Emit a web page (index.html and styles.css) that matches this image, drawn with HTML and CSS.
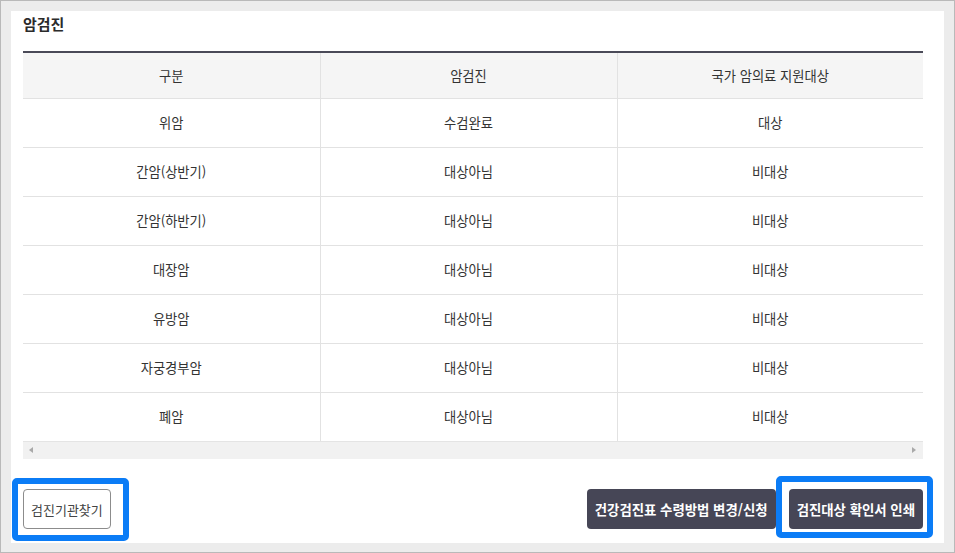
FILE: index.html
```html
<!DOCTYPE html>
<html lang="ko">
<head>
<meta charset="utf-8">
<title>암검진</title>
<link rel="stylesheet" href="styles.css">
</head>
<body>
<div class="frame">
  <div class="panel">
    <h2 class="title">암검진</h2>
    <table class="grid">
      <colgroup><col class="c1"><col class="c2"><col class="c3"></colgroup>
      <thead>
        <tr><th>구분</th><th>암검진</th><th>국가 암의료 지원대상</th></tr>
      </thead>
      <tbody>
        <tr><td>위암</td><td>수검완료</td><td>대상</td></tr>
        <tr><td>간암(상반기)</td><td>대상아님</td><td>비대상</td></tr>
        <tr><td>간암(하반기)</td><td>대상아님</td><td>비대상</td></tr>
        <tr><td>대장암</td><td>대상아님</td><td>비대상</td></tr>
        <tr><td>유방암</td><td>대상아님</td><td>비대상</td></tr>
        <tr><td>자궁경부암</td><td>대상아님</td><td>비대상</td></tr>
        <tr><td>폐암</td><td>대상아님</td><td>비대상</td></tr>
      </tbody>
    </table>
    <div class="hscroll">
      <span class="arrow arrow-left"></span>
      <span class="arrow arrow-right"></span>
    </div>
    <div class="footer">
      <button class="btn btn-line">검진기관찾기</button>
      <div class="btn-group">
        <button class="btn btn-dark">건강검진표 수령방법 변경/신청</button>
        <button class="btn btn-dark">검진대상 확인서 인쇄</button>
      </div>
    </div>
  </div>
  <div class="ring ring-left"></div>
  <div class="ring ring-right"></div>
</div>
</body>
</html>
```

FILE: styles.css
```css
* { box-sizing: border-box; }
html, body { margin: 0; padding: 0; background: #ececec; }
body { font-family: "Noto Sans CJK KR", "Malgun Gothic", sans-serif; color: #333; }

.frame {
  position: relative;
  width: 955px;
  height: 553px;
  border: 1px solid #b9b9b9;
  background: #ececec;
  padding: 10px 10px 9px 10px;
}

.panel {
  background: #fff;
  height: 100%;
  padding: 3px 21px 0 12px;
}

.title {
  margin: 0;
  font-size: 15px;
  font-weight: 700;
  line-height: 20px;
  color: #2b2b2b;
}

.grid {
  margin-top: 17px;
  width: 900px;
  table-layout: fixed;
  border-collapse: collapse;
  border-top: 2px solid #4a4a58;
  font-size: 13.3px;
  color: #333;
}
.grid .c1 { width: 297px; }
.grid .c2 { width: 297px; }
.grid .c3 { width: 306px; }

.grid th, .grid td {
  padding: 0;
  text-align: center;
  font-weight: 400;
  border-bottom: 1px solid #e2e2e2;
}
.grid th + th, .grid td + td { border-left: 1px solid #e2e2e2; }
.grid th { background: #f5f5f5; line-height: 45px; }
.grid td { line-height: 48px; }
.grid tbody tr:last-child td { border-bottom: 0; }

.hscroll {
  position: relative;
  height: 18px;
  width: 900px;
  background: #f1f1f1;
  border-top: 1px solid #e4e4e4;
}
.arrow {
  position: absolute;
  top: 5px;
  width: 0;
  height: 0;
  border-top: 3.5px solid transparent;
  border-bottom: 3.5px solid transparent;
}
.arrow-left { left: 6px; border-right: 4px solid #a9a9a9; }
.arrow-right { right: 7px; border-left: 4px solid #a9a9a9; }

.footer {
  margin-top: 30px;
  display: flex;
  justify-content: space-between;
  width: 900px;
}
.btn-group { display: flex; gap: 13px; }

.btn {
  height: 40px;
  font-family: inherit;
  border-radius: 4px;
  cursor: pointer;
}
.btn-line {
  background: #fff;
  color: #444;
  font-size: 13px;
  border: 1px solid #8c8c8c;
  padding: 0 7px;
}
.btn-dark {
  background: #464656;
  color: #fff;
  font-size: 13.4px;
  font-weight: 700;
  border: 0;
  padding: 0 8px;
}

.ring {
  position: absolute;
  border: 6px solid #0b7cf6;
  border-radius: 5px;
  pointer-events: none;
}
.ring-left { left: 11px; top: 477px; width: 117px; height: 63px; }
.ring-right { left: 775px; top: 475px; width: 157px; height: 62px; }
```
